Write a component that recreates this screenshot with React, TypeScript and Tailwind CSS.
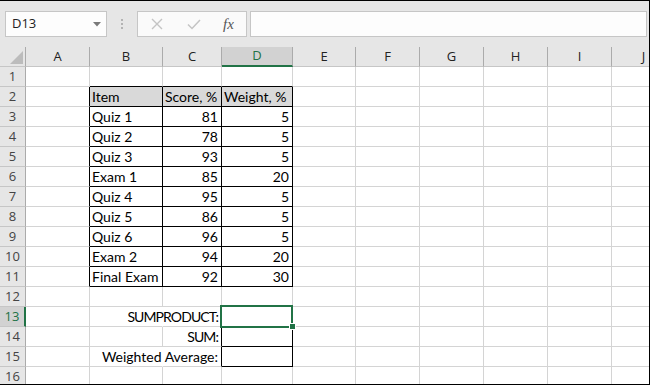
import React from "react";

const colNames = ["A", "B", "C", "D", "E", "F", "G", "H", "I", "J"];
const colWidths = [
  "w-[64px]",
  "w-[73px]",
  "w-[59px]",
  "w-[71px]",
  "w-[63px]",
  "w-[64px]",
  "w-[64px]",
  "w-[64px]",
  "w-[64px]",
  "w-[64px]",
];

type Cell = { text: string; right?: boolean; fill?: boolean; tight?: boolean };

const scores: [string, number, number][] = [
  ["Quiz 1", 81, 5],
  ["Quiz 2", 78, 5],
  ["Quiz 3", 93, 5],
  ["Exam 1", 85, 20],
  ["Quiz 4", 95, 5],
  ["Quiz 5", 86, 5],
  ["Quiz 6", 96, 5],
  ["Exam 2", 94, 20],
  ["Final Exam", 92, 30],
];

const cells: Record<string, Cell> = {
  B2: { text: "Item", fill: true },
  C2: { text: "Score, %", fill: true },
  D2: { text: "Weight, %", fill: true },
  C13: { text: "SUMPRODUCT:", right: true, tight: true },
  C14: { text: "SUM:", right: true, tight: true },
  C15: { text: "Weighted Average:", right: true },
};
scores.forEach(([item, score, weight], i) => {
  const row = i + 3;
  cells[`B${row}`] = { text: item };
  cells[`C${row}`] = { text: String(score), right: true };
  cells[`D${row}`] = { text: String(weight), right: true };
});

function rightBlack(col: string, row: number) {
  if (row >= 2 && row <= 11) return ["A", "B", "C", "D"].includes(col);
  if (row >= 13 && row <= 15) return col === "C" || col === "D";
  return false;
}

function bottomBlack(col: string, row: number) {
  if (row >= 1 && row <= 11) return ["B", "C", "D"].includes(col);
  if (row >= 12 && row <= 15) return col === "D";
  return false;
}

function GridCell({ col, row, width }: { col: string; row: number; width: string }) {
  const cell = cells[`${col}${row}`];
  const hideRight = col === "B" && (row === 13 || row === 15);
  const rightColor = rightBlack(col, row)
    ? "border-r-black"
    : hideRight
      ? "border-r-white"
      : "border-r-[#d4d4d4]";
  const bottomColor = bottomBlack(col, row) ? "border-b-black" : "border-b-[#d4d4d4]";
  const selected = col === "D" && row === 13;

  return (
    <div
      className={`relative flex h-[20px] flex-none items-end border-r border-b pb-[1px] ${width} ${rightColor} ${bottomColor} ${
        cell?.fill ? "bg-[#d9d9d9]" : "bg-white"
      } ${cell?.right ? "justify-end pr-[3px]" : "justify-start pl-[2px]"}`}
    >
      {cell && (
        <span
          className={`whitespace-nowrap text-[14px] leading-[17px] text-black ${cell.tight ? "tracking-[-0.9px]" : ""}`}
        >
          {cell.text}
        </span>
      )}
      {selected && (
        <>
          <div className="absolute -top-[2px] -left-[2px] z-10 h-[23px] w-[73px] border-2 border-[#217346]" />
          <div className="absolute -right-[4px] -bottom-[4px] z-20 h-[7px] w-[7px] border border-white bg-[#217346]" />
        </>
      )}
    </div>
  );
}

function RowHeader({ row }: { row: number }) {
  const active = row === 13;
  return (
    <div
      className={`flex h-[20px] w-[26px] flex-none items-center justify-center border-b border-b-[#c6c6c6] text-[13px] ${
        active
          ? "border-r-2 border-r-[#217346] bg-[#d2d2d2] text-[#217346]"
          : "border-r border-r-[#ababab] bg-[#e6e6e6] text-[#444]"
      }`}
      style={{ fontFamily: '"Open Sans", sans-serif' }}
    >
      {row}
    </div>
  );
}

export default function App() {
  const rows = Array.from({ length: 16 }, (_, i) => i + 1);

  return (
    <div
      className="h-[385px] w-[650px] overflow-hidden border-t border-r border-b border-black bg-white"
      style={{ fontFamily: 'Lato, "Liberation Sans", sans-serif' }}
    >
      {/* Formula bar */}
      <div className="flex h-[46px] items-start bg-[#e6e6e6] pt-[10px] pl-[5px]">
        <div className="flex h-[26px] w-[102px] items-center justify-between border border-[#c6c6c6] bg-[#fdfdfd] pr-[5px] pl-[6px]">
          <span className="text-[13px] text-[#222]" style={{ fontFamily: '"Open Sans", sans-serif' }}>
            D13
          </span>
          <svg width="8" height="5" viewBox="0 0 8 5">
            <path d="M0 0h8L4 4.5z" fill="#7a7a7a" />
          </svg>
        </div>
        <div className="flex w-[30px] flex-col items-center gap-[2px] pt-[8px]">
          <span className="h-[2px] w-[2px] bg-[#b3b3b3]" />
          <span className="h-[2px] w-[2px] bg-[#b3b3b3]" />
          <span className="h-[2px] w-[2px] bg-[#b3b3b3]" />
        </div>
        <div className="flex h-[26px] w-[110px] items-center border border-[#c6c6c6] bg-[#fafafa]">
          <svg width="12" height="12" viewBox="0 0 12 12" className="ml-[13px]">
            <path d="M1 1l10 10M11 1L1 11" stroke="#c4c4c4" strokeWidth="1.4" />
          </svg>
          <svg width="14" height="11" viewBox="0 0 14 11" className="ml-[24px]">
            <path d="M1 5.5l4 4L13 1" stroke="#c4c4c4" strokeWidth="1.5" fill="none" />
          </svg>
          <span
            className="ml-[22px] text-[15px] italic text-[#555]"
            style={{ fontFamily: '"Liberation Serif", serif' }}
          >
            fx
          </span>
        </div>
        <div className="mr-[2px] ml-[3px] h-[26px] flex-1 border border-[#c6c6c6] bg-[#fdfdfd]" />
      </div>

      {/* Column headers */}
      <div className="flex h-[20px]">
        <div className="relative h-[20px] w-[26px] flex-none border-r border-b border-r-[#ababab] border-b-[#c6c6c6] bg-[#e6e6e6]">
          <svg width="13" height="13" viewBox="0 0 13 13" className="absolute top-[4px] left-[10px]">
            <path d="M13 0V13H0z" fill="#bcbcbc" />
          </svg>
        </div>
        {colNames.map((name, i) => {
          const active = name === "D";
          return (
            <div
              key={name}
              className={`flex h-[20px] flex-none items-center justify-center border-r border-r-[#ababab] text-[13px] ${colWidths[i]} ${
                active
                  ? "border-b-2 border-b-[#217346] bg-[#d2d2d2] text-[#217346]"
                  : "border-b border-b-[#c6c6c6] bg-[#e6e6e6] text-[#222]"
              }`}
              style={{ fontFamily: '"Open Sans", sans-serif' }}
            >
              {name}
            </div>
          );
        })}
      </div>

      {/* Grid */}
      {rows.map((row) => (
        <div key={row} className="flex">
          <RowHeader row={row} />
          {colNames.map((name, i) => (
            <GridCell key={name} col={name} row={row} width={colWidths[i]} />
          ))}
        </div>
      ))}
    </div>
  );
}
